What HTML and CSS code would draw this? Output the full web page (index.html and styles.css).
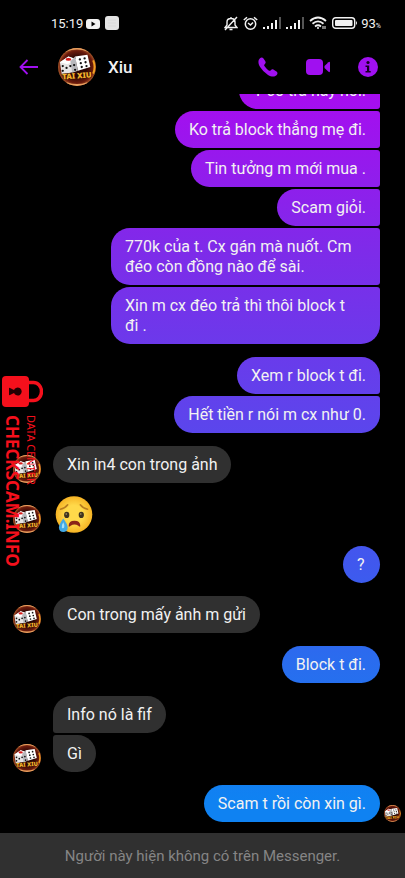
FILE: index.html
```
<!DOCTYPE html>
<html lang="vi">
<head>
    <meta charset="UTF-8">
    <meta name="viewport" content="width=device-width, initial-scale=1.0">
    <title>Xiu - Messenger</title>
    <link rel="stylesheet" href="styles.css">
</head>
<body>

    <!-- Shared drawings -->
    <svg class="sprite" aria-hidden="true">
        <defs>
            <radialGradient id="avatarBg">
                <stop offset="0.5" stop-color="#2a0604"/>
                <stop offset="0.85" stop-color="#6b1a0c"/>
                <stop offset="1" stop-color="#a8572a"/>
            </radialGradient>
            <clipPath id="avatarClip"><circle cx="20" cy="20" r="20"/></clipPath>
        </defs>
        <symbol id="avatar" viewBox="0 0 40 40">
            <g clip-path="url(#avatarClip)">
                <rect width="40" height="40" fill="url(#avatarBg)"/>
                <path d="M8 3Q20-2 32 3" fill="none" stroke="#e8a060" stroke-width="2"/>
                <path d="M9 37Q20 41 31 37" fill="none" stroke="#e8a060" stroke-width="2"/>
                <path d="M37 13Q40 20 37 27" fill="none" stroke="#f0a020" stroke-width="2"/>
                <path d="M2 15L11 9L20 12L18 25L4 28Z" fill="#e6e4e4"/>
                <path d="M2 15L11 9L20 12L10 17Z" fill="#fff"/>
                <path d="M18 9L31 7L34 20L21 24Z" fill="#fff"/>
                <path d="M18 9L21 24L15 26L13 14Z" fill="#b8b8bc"/>
                <ellipse cx="11" cy="12" rx="3" ry="1.5" fill="#d61818"/>
                <g fill="#111">
                    <circle cx="5" cy="19" r="1.2"/><circle cx="5" cy="24" r="1.2"/>
                    <circle cx="9" cy="21" r="1.2"/><circle cx="13" cy="19" r="1.2"/>
                    <circle cx="23" cy="12" r="1.2"/><circle cx="28" cy="11" r="1.2"/>
                    <circle cx="24" cy="16" r="1.2"/><circle cx="29" cy="15" r="1.2"/>
                    <circle cx="25" cy="20" r="1.2"/><circle cx="30" cy="19" r="1.2"/>
                    <circle cx="17" cy="18" r="1.2"/><circle cx="18" cy="23" r="1.2"/>
                </g>
                <text class="avatar-text" x="20" y="32" text-anchor="middle" transform="rotate(-4 20 30)">TAI XIU</text>
            </g>
        </symbol>
        <symbol id="signal" viewBox="0 0 18 12">
            <path d="M0 10h2v2H0zM4 9h2v3H4zM8 6h2v6H8zM12 3h2v9h-2z" fill="#f2f2f2"/>
            <path d="M16 0h2v12h-2z" fill="#555"/>
        </symbol>
    </svg>

    <div class="status-bar">
        <span class="time">15:19</span>
        <svg width="14" height="11" viewBox="0 0 14 11"><rect width="14" height="10" y="1" rx="3" fill="#f2f2f2"/><path d="M5.500 3.500v5l4-2.500z" fill="#000"/></svg>
        <svg width="14" height="14" viewBox="0 0 14 14"><rect width="14" height="14" rx="3" fill="#e4e4e4"/><path d="M3 4h8M3 7h8M3 10h8" stroke="#dadada"/></svg>
        <span class="spacer"></span>
        <svg width="14" height="15" viewBox="0 0 14 15" fill="none" stroke="#f2f2f2" stroke-width="1.400"><path d="M1 11.500h12L11 9V6Q11 2.500 7 2.500T3 6v3zM7 1v1.500M5.500 13.500h3M1 14L13 1"/></svg>
        <svg width="15" height="15" viewBox="0 0 15 15" fill="none" stroke="#f2f2f2" stroke-width="1.500"><circle cx="7.500" cy="8" r="5.200"/><path d="M.8 4L4 1.200M14.200 4L11 1.200M5 7l2.500 2L10 6.500"/></svg>
        <svg width="18" height="12"><use href="#signal"/></svg>
        <svg width="18" height="12"><use href="#signal"/></svg>
        <svg width="18" height="14" viewBox="0 0 18 14" fill="none" stroke="#f2f2f2" stroke-width="1.800"><path d="M1 5Q9-2 17 5M3.500 7.800Q9 3 14.500 7.800M6 10.500Q9 8 12 10.500"/><circle cx="9" cy="12" r="1" fill="#f2f2f2" stroke="none"/><path d="M14 10v3M16 10v3" stroke-width="1"/></svg>
        <svg width="26" height="12" viewBox="0 0 26 12"><rect x=".7" y=".7" width="22" height="10.600" rx="3" fill="none" stroke="#f2f2f2" stroke-width="1.400"/><rect x="3" y="3" width="17.500" height="6" rx="1" fill="#f2f2f2"/><path d="M24 4q2 2 0 4z" fill="#f2f2f2"/></svg>
        <span class="battery">93<small>%</small></span>
    </div>

    <header class="chat-header">
        <button class="icon-button" aria-label="Quay lại">
            <svg width="20" height="16" viewBox="0 0 20 16" fill="none" stroke="currentColor" stroke-width="1.800"><path d="M19 8H2M8.500 1L1.500 8l7 7"/></svg>
        </button>
        <svg class="header-avatar"><use href="#avatar"/></svg>
        <h1>Xiu</h1>
        <button class="icon-button" aria-label="Gọi thoại">
            <svg width="20" height="20" viewBox="0 0 20 20" fill="currentColor"><path d="M1.800 1.500C3 .2 4.500.2 5.500 1.500L7.300 4.300C8 5.500 7.700 6.300 6.700 7.200C6 8 6 8.500 6.600 9.300Q8.300 11.800 10.700 13.400C11.500 14 12 14 12.800 13.300C13.700 12.300 14.500 12 15.700 12.700L18.500 14.500C19.800 15.500 19.800 17 18.500 18.200C16.500 20.200 13.300 19.900 10 17.900Q5 14.800 2.100 10C.1 6.700-.2 3.500 1.800 1.500Z"/></svg>
        </button>
        <button class="icon-button" aria-label="Gọi video">
            <svg width="24" height="16" viewBox="0 0 24 16" fill="currentColor"><rect width="17" height="16" rx="4"/><path d="M18.500 7L22.500 3.200Q24 2.200 24 4v8q0 1.800-1.500.8L18.500 9z"/></svg>
        </button>
        <button class="icon-button" aria-label="Thông tin">
            <svg width="20" height="20" viewBox="0 0 20 20"><circle cx="10" cy="10" r="10" fill="currentColor"/><circle cx="10" cy="5.500" r="1.600" fill="#160022"/><path d="M7.500 8.500h3.700v5.500h1.500v1.500H7.500V14H9v-4H7.500z" fill="#160022"/></svg>
        </button>
    </header>

    <main class="messages">
        <div class="group sent">
            <p class="bubble">T có trả hay nói.</p>
            <p class="bubble">Ko trả block thẳng mẹ đi.</p>
            <p class="bubble">Tin tưởng m mới mua .</p>
            <p class="bubble">Scam giỏi.</p>
            <p class="bubble">770k của t. Cx gán mà nuốt. Cm đéo còn đồng nào để sài.</p>
            <p class="bubble">Xin m cx đéo trả thì thôi block t đi&nbsp;.</p>
        </div>
        <div class="group sent">
            <p class="bubble">Xem r block t đi.</p>
            <p class="bubble">Hết tiền r nói m cx như 0.</p>
        </div>
        <div class="received">
            <svg class="small-avatar"><use href="#avatar"/></svg>
            <div class="group">
                <p class="bubble">Xin in4 con trong ảnh</p>
            </div>
        </div>
        <div class="received">
            <svg class="small-avatar"><use href="#avatar"/></svg>
            <svg class="emoji" viewBox="0 0 38 38" role="img" aria-label="Mặt khóc">
                <defs>
                    <radialGradient id="face"><stop offset="0.5" stop-color="#ffd94a"/><stop offset="1" stop-color="#f6b324"/></radialGradient>
                </defs>
                <circle cx="19" cy="19" r="18.800" fill="url(#face)"/>
                <path d="M5 13.500Q10 12.500 12.500 9M25.500 9Q28 12.500 33 13.500" fill="none" stroke="#b97c20" stroke-width="1.600" stroke-linecap="round"/>
                <ellipse cx="11.500" cy="19.500" rx="2.700" ry="3.200" fill="#40341f"/>
                <ellipse cx="26.500" cy="19.500" rx="2.700" ry="3.200" fill="#40341f"/>
                <circle cx="11" cy="18.500" r=".7" fill="#c9b27c"/><circle cx="26" cy="18.500" r=".7" fill="#c9b27c"/>
                <path d="M13.500 31Q13.500 25.500 19.500 25.500T25.500 31Q25 32 23.500 30.500Q19.500 28 15.500 30.500Q14 32 13.500 31Z" fill="#8a2418"/>
                <path d="M8 23Q3.500 29 3.500 32.500Q4 37 8 37T12.500 32.500Q12.500 29 8 23Z" fill="#43a9e6"/>
                <path d="M8 27Q6 30 6.500 32.500Q8 34 9 32Q9.500 30 8 27Z" fill="#a5e0fa"/>
            </svg>
        </div>
        <div class="group sent">
            <p class="bubble">?</p>
        </div>
        <div class="received">
            <svg class="small-avatar"><use href="#avatar"/></svg>
            <div class="group">
                <p class="bubble">Con trong mấy ảnh m gửi</p>
            </div>
        </div>
        <div class="group sent">
            <p class="bubble">Block t đi.</p>
        </div>
        <div class="received">
            <svg class="small-avatar"><use href="#avatar"/></svg>
            <div class="group">
                <p class="bubble">Info nó là fif</p>
                <p class="bubble">Gì</p>
            </div>
        </div>
        <div class="last-sent">
            <div class="group sent">
                <p class="bubble">Scam t rồi còn xin gì.</p>
            </div>
            <svg class="seen-avatar"><use href="#avatar"/></svg>
        </div>
    </main>

    <footer class="notice">Người này hiện không có trên Messenger.</footer>

    <!-- Watermark over the conversation -->
    <div class="watermark">
        <svg width="41" height="31" viewBox="0 0 41 31">
            <path d="M26 6.500h5.500a8 9 0 0 1 0 18H26" fill="none" stroke="#f5101c" stroke-width="3.500"/>
            <rect width="27" height="31" rx="4" fill="#f5101c"/>
            <path d="M7 12.500Q7 11.500 8 12Q10 13 12 14A4 4 0 1 1 12 17Q10 18 8 19Q7 19.500 7 18.500Z" fill="#240003"/>
        </svg>
        <div class="watermark-text">
            <span class="watermark-label">DATA CENTER</span>
            <strong>CHECKSCAM.INFO</strong>
        </div>
    </div>

</body>
</html>
```
FILE: styles.css
```
* {
    box-sizing: border-box;
}
body {
    margin: 0;
    height: 100vh;
    display: flex;
    flex-direction: column;
    position: relative;
    font-family: Roboto, "Noto Sans", sans-serif;
    background-color: #000000;
    color: #f2f2f2;
}
svg {
    flex-shrink: 0;
}
.sprite {
    position: absolute;
    width: 0;
    height: 0;
}
.avatar-text {
    font-family: "Noto Sans", sans-serif;
    font-size: 8px;
    font-weight: 900;
    fill: #f5b52c;
    stroke: #3a1405;
    stroke-width: 1px;
    paint-order: stroke;
}
.status-bar {
    display: flex;
    align-items: center;
    gap: 5px;
    height: 46px;
    flex-shrink: 0;
    padding: 0 24px 0 51px;
    font-size: 13px;
}
.time {
    margin-right: -2px;
}
.spacer {
    flex: 1;
}
.battery {
    margin-left: -2px;
}
.battery small {
    font-size: 7px;
}
.chat-header {
    display: flex;
    align-items: center;
    height: 48px;
    flex-shrink: 0;
    padding: 0 27px 7px 19px;
}
.header-avatar {
    width: 38px;
    height: 38px;
    margin: 0 12px 0 19px;
}
.chat-header h1 {
    flex: 1;
    margin: 0;
    font-size: 17px;
    font-weight: 500;
}
.icon-button {
    display: flex;
    padding: 0;
    border: 0;
    background: none;
    color: #a010f0;
    cursor: pointer;
}
.icon-button + .icon-button {
    margin-left: 28px;
}
.messages {
    flex: 1;
    min-height: 0;
    overflow: hidden;
    display: flex;
    flex-direction: column;
    justify-content: flex-end;
    gap: 13px;
    padding-bottom: 11px;
}
.group {
    display: flex;
    flex-direction: column;
    align-items: flex-start;
    gap: 2px;
}
.sent {
    align-items: flex-end;
    padding-right: 25px;
}
.bubble {
    margin: 0;
    min-width: 37px;
    max-width: 269px;
    padding: 9px 14px 8px;
    border-radius: 19px;
    font-size: 16px;
    line-height: 20px;
    background-color: #303030;
}
/* one gradient runs down the whole window behind the sent bubbles */
.sent .bubble {
    background: linear-gradient(#a80cf0 90px, #7e2be9 250px, #5f43ec 410px, #4058ee 565px, #2a6cee 660px, #0f82f2 800px) fixed;
}
.group .bubble:not(:last-child) {
    border-bottom-left-radius: 3px;
}
.group .bubble:not(:first-child) {
    border-top-left-radius: 3px;
}
.sent .bubble:not(:last-child) {
    border-bottom-left-radius: 19px;
    border-bottom-right-radius: 3px;
}
.sent .bubble:not(:first-child) {
    border-top-left-radius: 19px;
    border-top-right-radius: 3px;
}
.received {
    display: flex;
    align-items: flex-end;
    gap: 12px;
    padding-left: 13px;
}
.small-avatar {
    width: 28px;
    height: 28px;
}
.emoji {
    width: 38px;
    height: 37px;
    margin-left: 2px;
}
.last-sent {
    display: flex;
    align-items: flex-end;
    justify-content: flex-end;
    gap: 4px;
    padding-right: 4px;
}
.last-sent .sent {
    padding-right: 0;
}
.seen-avatar {
    width: 17px;
    height: 17px;
}
.notice {
    flex-shrink: 0;
    padding: 13px 16px 12px;
    font-size: 15px;
    line-height: 20px;
    text-align: center;
    color: #858585;
    background-color: #303030;
}
.watermark {
    position: absolute;
    top: 376px;
    left: 2px;
    color: #f5101c;
}
.watermark svg {
    display: block;
}
.watermark-text {
    display: flex;
    flex-direction: column;
    gap: 2px;
    margin-top: 8px;
    writing-mode: vertical-rl;
    font-family: "Noto Sans", sans-serif;
    font-size: 17px;
    line-height: 20px;
}
.watermark-label {
    font-size: 11px;
    line-height: 14px;
}
```
